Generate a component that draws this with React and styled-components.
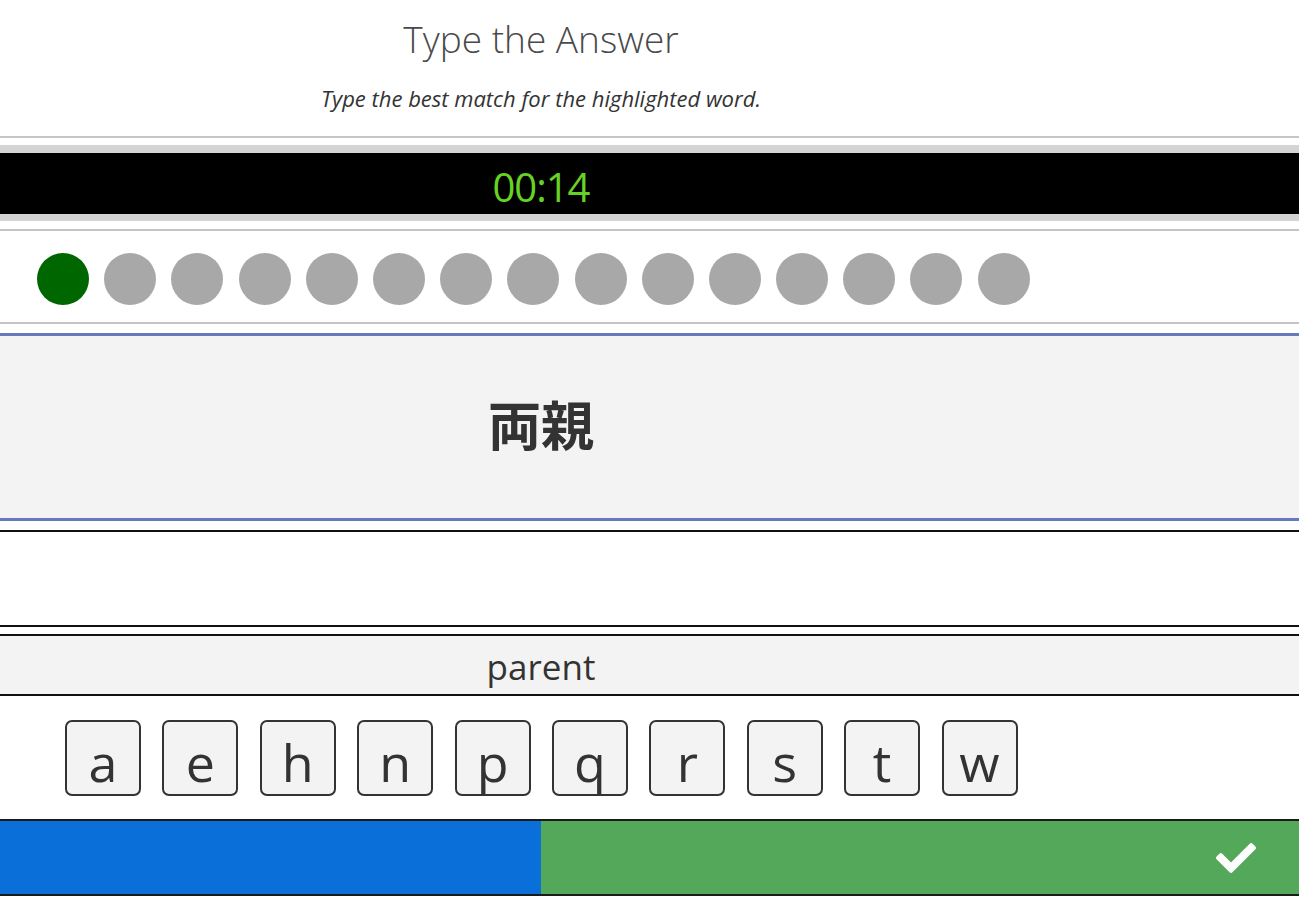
import React from 'react';
import styled, { createGlobalStyle } from 'styled-components';
import { FaCheck } from 'react-icons/fa';

const GlobalStyle = createGlobalStyle`
  html, body {
    margin: 0;
    padding: 0;
    background: #ffffff;
    font-family: 'Open Sans', 'Noto Sans', sans-serif;
    color: #333;
  }
`;

const CONTENT_WIDTH = 1082;

const Page = styled.div`
  width: 1299px;
  overflow: hidden;
`;

const Header = styled.header`
  height: 136px;
  box-sizing: border-box;
  width: ${CONTENT_WIDTH}px;
  text-align: center;
  padding-top: 14px;
`;

const Title = styled.h1`
  margin: 0;
  font-size: 37px;
  font-weight: 300;
  line-height: 50px;
  color: #4a4a4a;
`;

const Subtitle = styled.p`
  margin: 19px 0 0;
  font-size: 22px;
  font-style: italic;
  line-height: 30px;
  color: #333;
`;

const HeaderRule = styled.div`
  border-bottom: 2px solid #c6c6c6;
`;

const TimerBar = styled.div`
  margin-top: 7px;
  border-top: 8px solid #d4d4d4;
  border-bottom: 7px solid #d4d4d4;
  background: #000;
  height: 61px;
`;

const TimerText = styled.div`
  width: ${CONTENT_WIDTH}px;
  text-align: center;
  color: #66d324;
  font-size: 40px;
  line-height: 61px;
  padding-top: 3px;
  letter-spacing: -1px;
`;

const DotRow = styled.div`
  margin-top: 8px;
  border-top: 2px solid #c4c4c4;
  border-bottom: 2px solid #c4c4c4;
  height: 91px;
  box-sizing: content-box;
  display: flex;
  align-items: center;
  gap: 15.2px;
  padding: 0 0 0 37px;
`;

const Dot = styled.span`
  width: 52px;
  height: 52px;
  margin-top: 5px;
  border-radius: 50%;
  background: ${(p) => (p.done ? '#006600' : '#a8a8a8')};
  flex: none;
`;

const WordPanel = styled.div`
  margin-top: 9px;
  border-top: 3px solid #6678be;
  border-bottom: 3px solid #6678be;
  background: #f4f3f3;
  height: 182px;
`;

const Word = styled.div`
  width: ${CONTENT_WIDTH}px;
  text-align: center;
  font-family: 'Noto Sans CJK JP', 'Noto Sans', sans-serif;
  font-weight: 700;
  font-size: 53px;
  line-height: 174px;
  color: #333;
`;

const AnswerBox = styled.div`
  margin-top: 9px;
  border-top: 2px solid #111;
  border-bottom: 2px solid #111;
  height: 93px;
  background: #fff;
`;

const HintBar = styled.div`
  margin-top: 7px;
  border-top: 2px solid #111;
  border-bottom: 2px solid #111;
  height: 58px;
  background: #f3f3f3;
`;

const Hint = styled.div`
  width: ${CONTENT_WIDTH}px;
  text-align: center;
  font-size: 35px;
  line-height: 62px;
  color: #333;
`;

const KeyRow = styled.div`
  display: flex;
  gap: 21.4px;
  padding: 24px 0 23px 65px;
`;

const Key = styled.button`
  width: 76px;
  height: 76px;
  box-sizing: border-box;
  border: 2px solid #333;
  border-radius: 7px;
  background: #f3f3f3;
  font-family: 'Open Sans', 'Noto Sans', sans-serif;
  font-size: 52px;
  line-height: 52px;
  color: #333;
  padding: 14px 0 0;
  display: flex;
  justify-content: center;
  align-items: flex-start;
  overflow: visible;
  cursor: pointer;
`;

const Footer = styled.div`
  display: flex;
  border-top: 2px solid #1a1a1a;
  border-bottom: 2px solid #1a1a1a;
  height: 73px;
`;

const SkipButton = styled.div`
  width: 541px;
  background: #0a6fd9;
`;

const SubmitButton = styled.div`
  flex: 1;
  background: #54a85a;
  display: flex;
  align-items: center;
  justify-content: flex-end;
  padding-right: 43px;
  color: #fff;
`;

const dots = Array.from({ length: 15 }, (_, i) => i === 0);
const letters = ['a', 'e', 'h', 'n', 'p', 'q', 'r', 's', 't', 'w'];

export default function App() {
  return (
    <>
      <GlobalStyle />
      <Page>
        <Header>
          <Title>Type the Answer</Title>
          <Subtitle>Type the best match for the highlighted word.</Subtitle>
        </Header>
        <HeaderRule />
        <TimerBar>
          <TimerText>00:14</TimerText>
        </TimerBar>
        <DotRow>
          {dots.map((done, i) => (
            <Dot key={i} done={done} />
          ))}
        </DotRow>
        <WordPanel>
          <Word>両親</Word>
        </WordPanel>
        <AnswerBox />
        <HintBar>
          <Hint>parent</Hint>
        </HintBar>
        <KeyRow>
          {letters.map((l) => (
            <Key key={l}>{l}</Key>
          ))}
        </KeyRow>
        <Footer>
          <SkipButton />
          <SubmitButton>
            <FaCheck size={40} />
          </SubmitButton>
        </Footer>
      </Page>
    </>
  );
}
